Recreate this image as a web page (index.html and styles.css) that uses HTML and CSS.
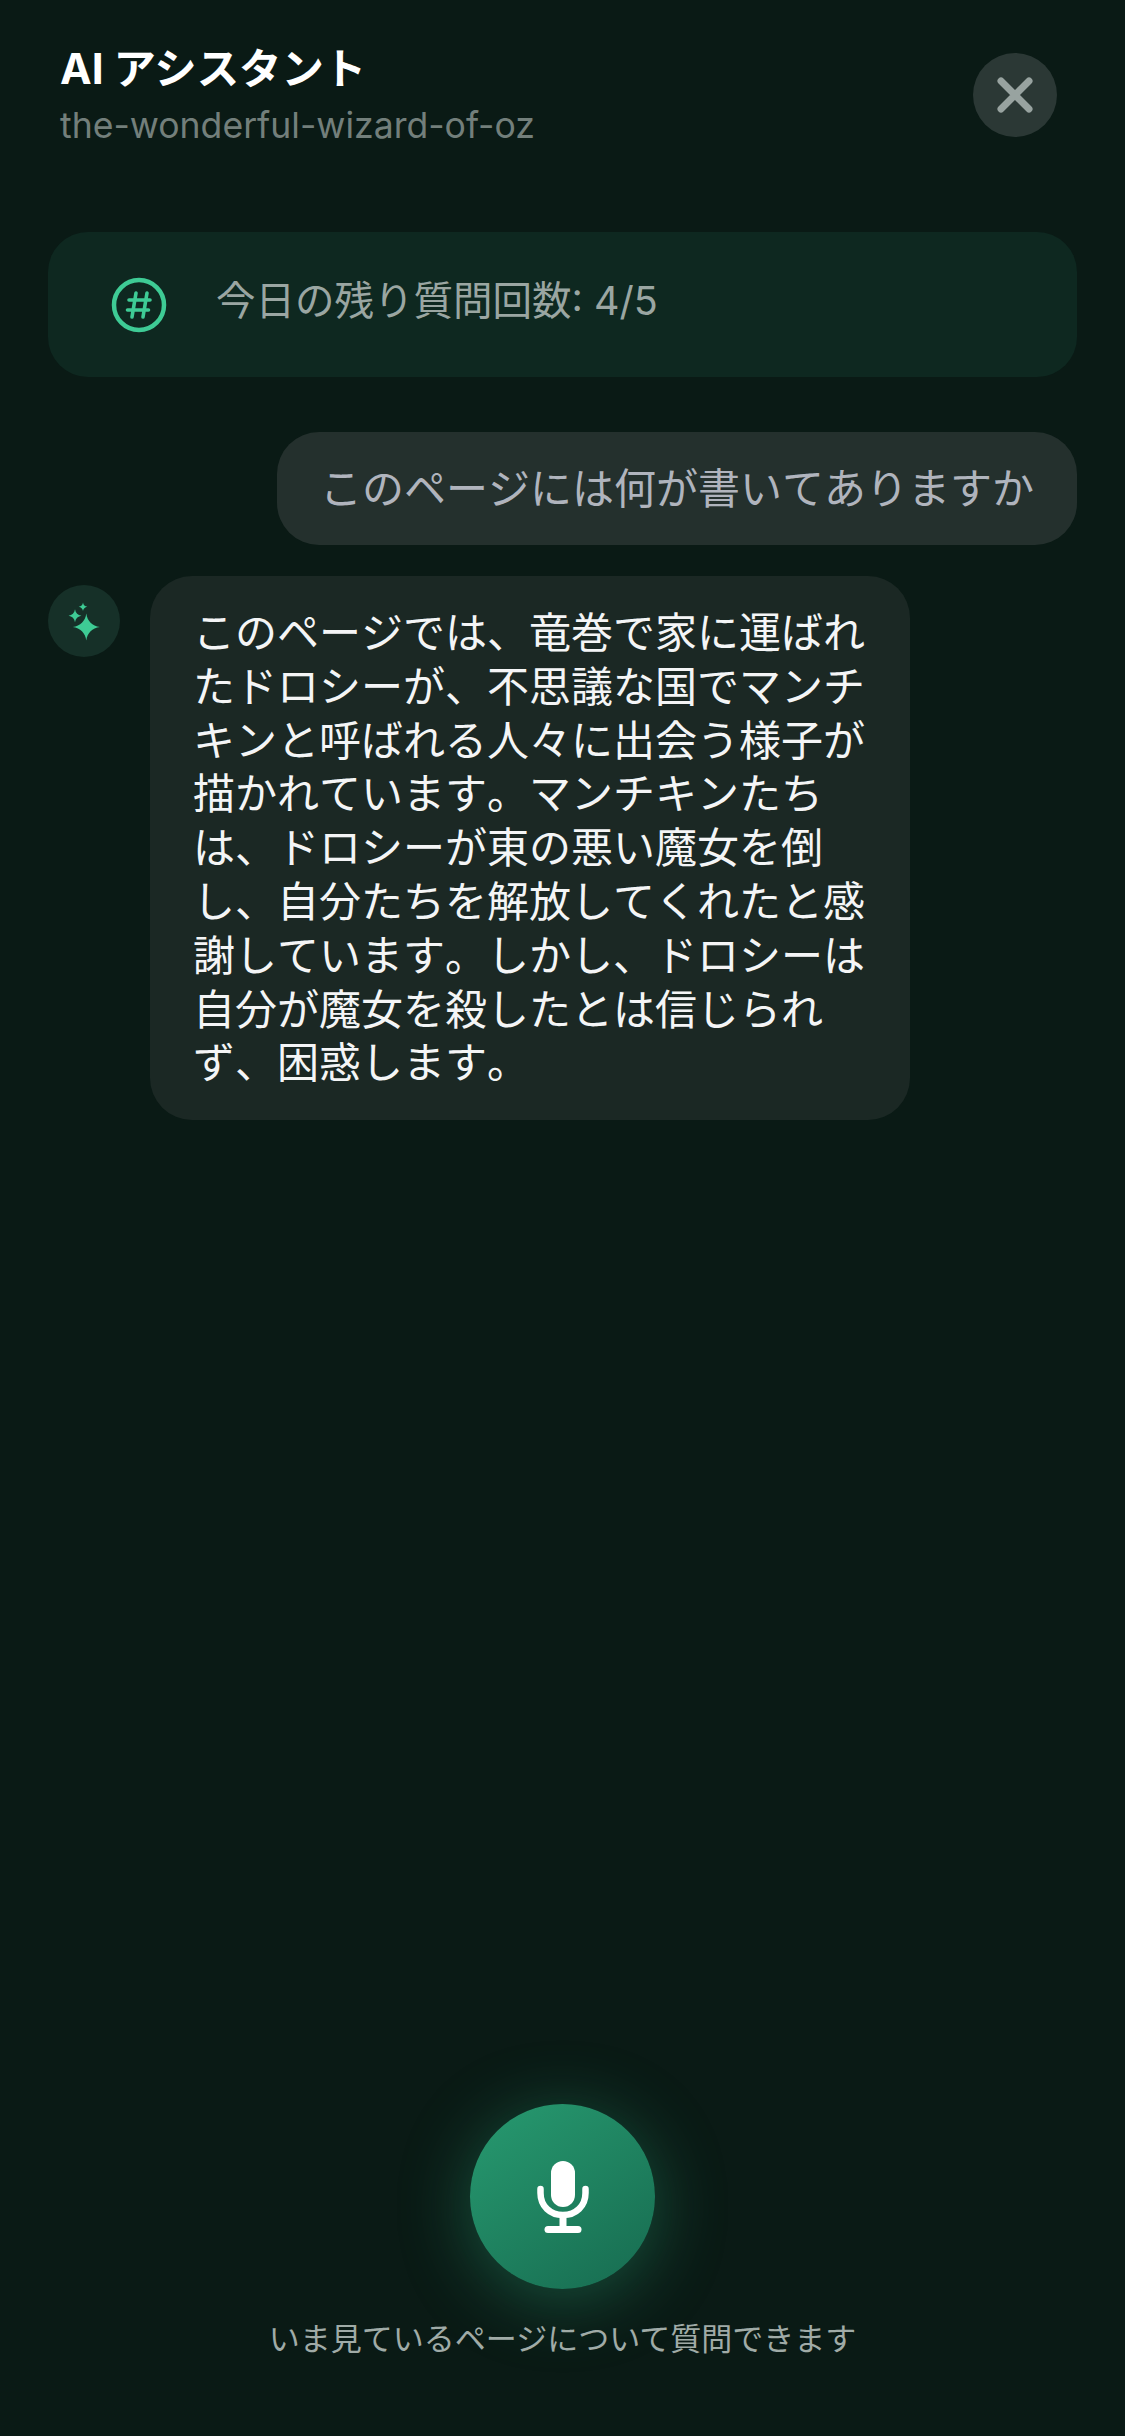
FILE: index.html
```html
<!DOCTYPE html>
<html lang="ja">
<head>
<meta charset="UTF-8">
<meta name="viewport" content="width=device-width, initial-scale=1.0">
<title>AI アシスタント</title>
<link rel="stylesheet" href="styles.css">
</head>
<body>
<div class="screen">
    <header class="header">
        <div class="header-text">
            <h1 class="title">AI アシスタント</h1>
            <div class="subtitle">the-wonderful-wizard-of-oz</div>
        </div>
        <button class="close-btn" aria-label="閉じる">
            <svg width="40" height="40" viewBox="0 0 40 40"><path d="M6 6L34 34M34 6L6 34" stroke="#98a3a0" stroke-width="7" stroke-linecap="round" fill="none"/></svg>
        </button>
    </header>

    <div class="quota">
        <svg class="quota-icon" width="56" height="56" viewBox="0 0 56 56" fill="none" stroke="#3ecb95">
            <circle cx="28" cy="28" r="25" stroke-width="4.5"/>
            <path d="M25 16L21 40M36 16L32 40M18 23H39M16.500 33H37.500" stroke-width="3.600" stroke-linecap="round"/>
        </svg>
        <span class="quota-text">今日の残り質問回数: 4/5</span>
    </div>

    <div class="messages">
        <div class="bubble bubble-user">このページには何が書いてありますか</div>
        <div class="answer">
            <div class="avatar">
                <svg width="72" height="72" viewBox="0 0 72 72" fill="#3ecb95">
                    <path id="star" transform="translate(38.300 42)" d="M0 -13.500C1 -6 6 -1 13.500 0C6 1 1 6 0 13.500C-1 6 -6 1 -13.500 0C-6 -1 -1 -6 0 -13.500Z"/>
                    <path transform="translate(27 30.700) scale(.48)" d="M0 -13.500C1 -6 6 -1 13.500 0C6 1 1 6 0 13.500C-1 6 -6 1 -13.500 0C-6 -1 -1 -6 0 -13.500Z"/>
                    <path transform="translate(35 21.700) scale(.32)" d="M0 -13.500C1 -6 6 -1 13.500 0C6 1 1 6 0 13.500C-1 6 -6 1 -13.500 0C-6 -1 -1 -6 0 -13.500Z"/>
                </svg>
            </div>
            <div class="bubble bubble-ai">このページでは、竜巻で家に運ばれたドロシーが、不思議な国でマンチキンと呼ばれる人々に出会う様子が描かれています。マンチキンたちは、ドロシーが東の悪い魔女を倒し、自分たちを解放してくれたと感謝しています。しかし、ドロシーは自分が魔女を殺したとは信じられず、困惑します。</div>
        </div>
    </div>

    <div class="voice">
        <button class="mic-btn" aria-label="音声入力">
            <svg width="52" height="72" viewBox="0 0 52 72" fill="none" stroke="#fff">
                <rect x="14" y="0" width="24" height="46" rx="12" fill="#fff" stroke="none"/>
                <path d="M3.500 28V32C3.500 45 13 54 26 54C39 54 48.500 45 48.500 32V28" stroke-width="6.500" stroke-linecap="round"/>
                <path d="M26 54V68" stroke-width="7"/>
                <path d="M11 68.500H41" stroke-width="7" stroke-linecap="round"/>
            </svg>
        </button>
        <div class="voice-hint">いま見ているページについて質問できます</div>
    </div>
</div>
</body>
</html>
```

FILE: styles.css
```css
html, body {
    margin: 0;
    padding: 0;
}
body {
    background-color: #0a1a15;
    font-family: 'Inter', 'Noto Sans CJK JP', sans-serif;
}
button {
    border: none;
    padding: 0;
    cursor: pointer;
}
.screen {
    height: 2436px;
    box-sizing: border-box;
    display: flex;
    flex-direction: column;
    padding: 0 48px 0;
    overflow: hidden;
}
.header {
    display: flex;
    justify-content: space-between;
    align-items: flex-start;
    padding: 44px 20px 0 12px;
}
.title {
    margin: 0;
    font-size: 42.400px;
    line-height: 50px;
    font-weight: 700;
    color: #fff;
}
.subtitle {
    margin-top: 11px;
    font-size: 35.600px;
    line-height: 42px;
    color: #737f7b;
}
.close-btn {
    width: 84px;
    height: 84px;
    margin-top: 9px;
    border-radius: 50%;
    background-color: #2b3835;
    display: flex;
    align-items: center;
    justify-content: center;
}
.quota {
    margin-top: 85px;
    height: 145px;
    box-sizing: border-box;
    padding: 45px 63px 0;
    display: flex;
    align-items: flex-start;
    gap: 49px;
    background-color: #0e2820;
    border-radius: 40px;
}
.quota-icon {
    flex-shrink: 0;
}
.quota-text {
    font-size: 39.500px;
    line-height: 48px;
    color: #9aa6a2;
}
.messages {
    margin-top: 55px;
    display: flex;
    flex-direction: column;
    gap: 31px;
}
.bubble {
    border-radius: 42px;
    font-kerning: none;
    text-spacing-trim: space-all;
}
.bubble-user {
    align-self: flex-end;
    padding: 30px 43px;
    font-size: 42px;
    line-height: 53px;
    background-color: #24302d;
    color: #b0b4bd;
}
.answer {
    display: flex;
    align-items: flex-start;
    gap: 30px;
}
.avatar {
    width: 72px;
    height: 72px;
    margin-top: 9px;
    flex-shrink: 0;
    border-radius: 50%;
    background-color: #163028;
    display: flex;
    align-items: center;
    justify-content: center;
}
.bubble-ai {
    width: 760px;
    box-sizing: border-box;
    padding: 30px 43px;
    font-size: 42px;
    line-height: 53.800px;
    background-color: #1b2824;
    color: #f4f5f6;
}
.voice {
    margin-top: auto;
    padding-bottom: 77px;
    display: flex;
    flex-direction: column;
    align-items: center;
    gap: 30px;
}
.mic-btn {
    width: 185px;
    height: 185px;
    border-radius: 50%;
    background: linear-gradient(145deg, #279a70, #176b50);
    box-shadow: 0 10px 70px rgba(46, 170, 125, 0.4);
    display: flex;
    align-items: center;
    justify-content: center;
}
.voice-hint {
    font-size: 31px;
    line-height: 40px;
    color: #a0aba7;
}
```
